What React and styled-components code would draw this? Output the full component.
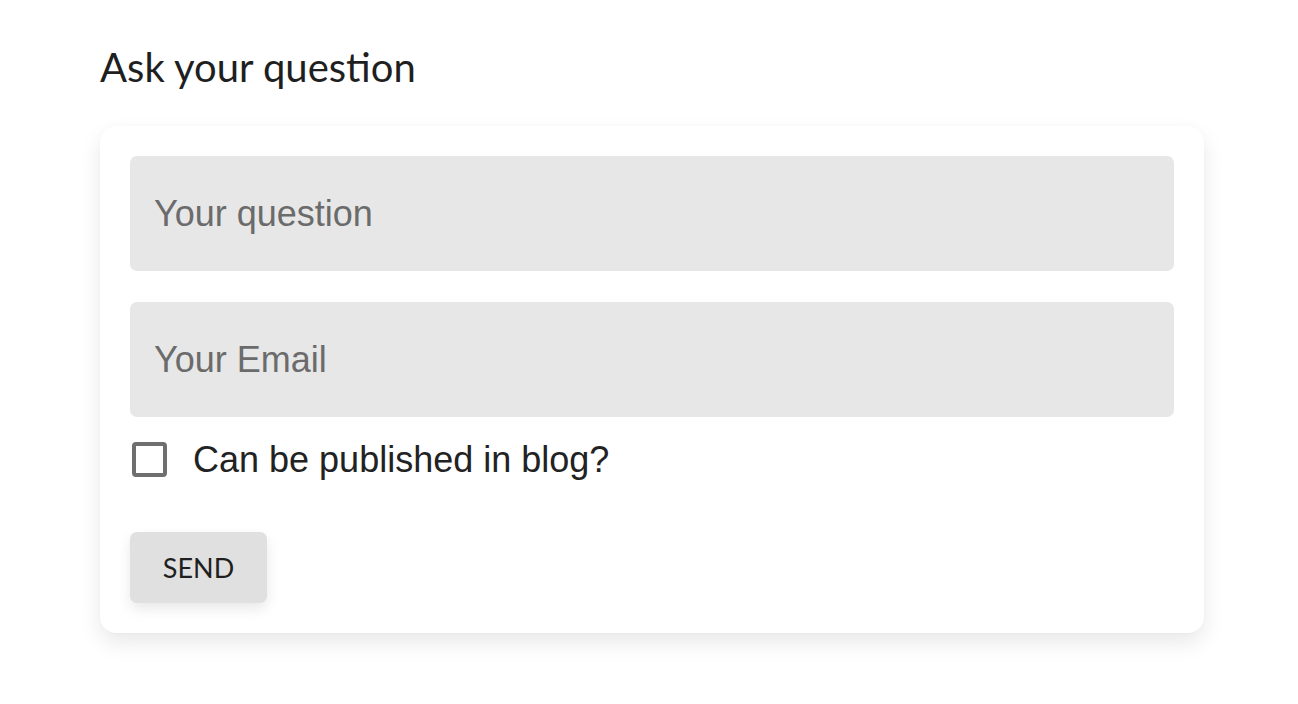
import React from 'react'
import { useState } from 'react'
import styled, { createGlobalStyle } from 'styled-components'

const GlobalStyle = createGlobalStyle`
    body {
        margin: 0;
        background: #fff;
        font-family: "Liberation Sans", Arial, sans-serif;
    }
`

export default function App() {
    const [question, setQuestion] = useState('')
    const [email, setEmail] = useState('')
    const [publish, setPublish] = useState(false)

    return (
        <>
            <GlobalStyle />
            <Page>
                <Title>Ask your question</Title>
                <Card onSubmit={(e) => e.preventDefault()}>
                    <Input
                        placeholder="Your question"
                        value={question}
                        onChange={(e) => setQuestion(e.target.value)}
                    />
                    <Input
                        placeholder="Your Email"
                        value={email}
                        onChange={(e) => setEmail(e.target.value)}
                    />
                    <CheckRow>
                        <Box
                            type="checkbox"
                            checked={publish}
                            onChange={(e) => setPublish(e.target.checked)}
                        />
                        <span>Can be published in blog?</span>
                    </CheckRow>
                    <SendButton type="submit">SEND</SendButton>
                </Card>
            </Page>
        </>
    )
}

const Page = styled.main`
    width: 1104px;
    padding: 43px 0 60px 100px;
`

const Title = styled.h1`
    margin: 0 0 35px;
    font-family: Lato, "Open Sans", sans-serif;
    font-weight: 400;
    font-size: 40px;
    line-height: 48px;
    color: #1f1f1f;
`

const Card = styled.form`
    display: flex;
    flex-direction: column;
    align-items: flex-start;
    gap: 31px;
    padding: 30px;
    background: #fff;
    border-radius: 16px;
    box-shadow: 0 10px 22px rgba(0, 0, 0, 0.09), 0 0 3px rgba(0, 0, 0, 0.03);
`

const Input = styled.input`
    box-sizing: border-box;
    width: 100%;
    height: 115px;
    padding: 0 24px;
    border: none;
    border-radius: 7px;
    background: #e7e7e7;
    font-family: "Liberation Sans", Arial, sans-serif;
    font-size: 36px;
    color: #222;
    outline: none;

    &::placeholder {
        color: #6b6b6b;
    }
`

const CheckRow = styled.label`
    display: flex;
    align-items: center;
    gap: 26px;
    height: 35px;
    margin: -6px 0 24px 2px;
    font-size: 36px;
    color: #222;
    cursor: pointer;
`

const Box = styled.input`
    appearance: none;
    box-sizing: border-box;
    width: 35px;
    height: 35px;
    margin: 0;
    border: 4px solid #6f6f6f;
    border-radius: 4px;
    background: #fff;
    cursor: pointer;

    &:checked {
        background: #6f6f6f;
    }
`

const SendButton = styled.button`
    width: 137px;
    height: 71px;
    border: none;
    border-radius: 7px;
    background: #e0e0e0;
    font-family: Lato, "Open Sans", sans-serif;
    font-size: 27px;
    color: #1f1f1f;
    box-shadow: 0 6px 14px rgba(0, 0, 0, 0.09);
    cursor: pointer;
`
